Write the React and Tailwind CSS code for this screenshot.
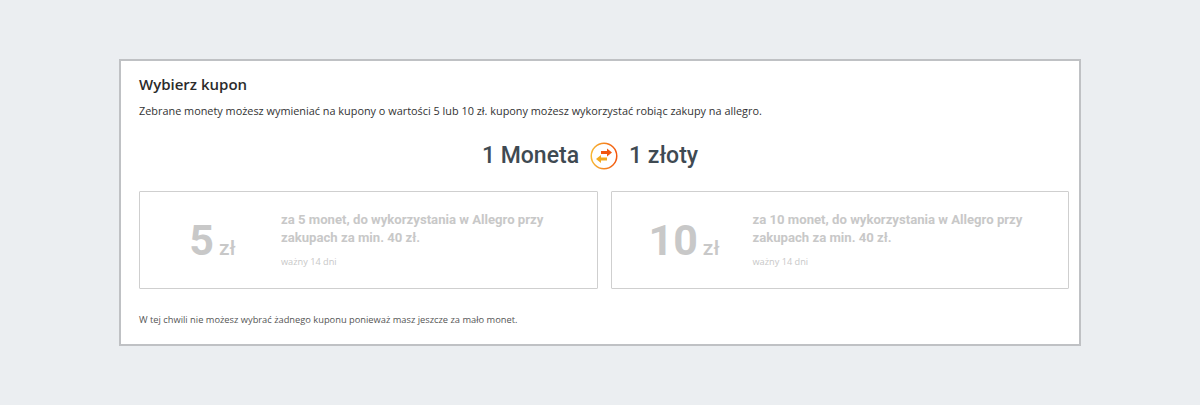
const R = { fontFamily: 'Roboto, sans-serif' };
const O = { fontFamily: '"Open Sans", sans-serif' };
function Coupon({ value }) {
  return (
    <div className="flex h-[98px] w-[459px] items-center rounded-[1px] border border-[#cfcfcf] bg-white">
      <div className="flex w-[141px] items-baseline justify-center pl-[4px] text-[#c8c8c8]">
        <span className="text-[43px] leading-none font-bold">{value}</span>
        <span className="ml-[5px] text-[21px] leading-none font-medium">zł</span>
      </div>
      <div className="w-[300px] pb-[1px]">
        <p className="text-[13.15px] leading-[18px] font-bold text-[#c8c8c8]">za {value} monet, do wykorzystania w Allegro przy<br />zakupach za min. 40 zł.</p>
        <p style={O} className="mt-[8px] text-[9.2px] leading-[14px] text-[#c8c8c8]">ważny 14 dni</p>
      </div>
    </div>
  );
}
export default function App() {
  return (
    <div style={R} className="flex h-[405px] w-[1200px] items-start justify-center bg-[#ebeef1] pt-[59px]">
      <div className="h-[287px] w-[962px] border-2 border-[#bfc1c4] bg-white pt-[13px] pr-[10px] pl-[18px]">
        <h2 style={O} className="text-[15px] leading-[20px] font-semibold text-[#2b2b2b]">Wybierz kupon</h2>
        <p style={O} className="mt-[9px] text-[10.88px] leading-[16px] text-[#333]">Zebrane monety możesz wymieniać na kupony o wartości 5 lub 10 zł. kupony możesz wykorzystać robiąc zakupy na allegro.</p>
        <div className="mt-[21px] flex items-center justify-center gap-[11px] pr-[28px] text-[23px] leading-[32px] font-medium text-[#3f4a52]">
          <span>1 Moneta</span>
          <svg width="28" height="28" viewBox="0 0 28 28" fill="none">
            <defs>
              <linearGradient id="ring" x1="0" y1="0" x2="1" y2="0">
                <stop offset="0" stopColor="#f7b733" />
                <stop offset="1" stopColor="#f2570f" />
              </linearGradient>
            </defs>
            <circle cx="14" cy="14" r="12.75" stroke="url(#ring)" strokeWidth="1.5" />
            <path d="M13 9.5h6V7l5 4-5 4v-2.5h-6z" transform="translate(-2 -0.5)" fill="#f2570f" />
            <path d="M15 15.5H9V13l-5 4 5 4v-2.5h6z" transform="translate(2 0)" fill="#f2a91f" />
          </svg>
          <span>1 złoty</span>
        </div>
        <div className="mt-[19px] flex gap-[13px]">
          <Coupon value="5" />
          <Coupon value="10" />
        </div>
        <p style={O} className="mt-[24px] text-[9.3px] leading-[14px] text-[#555]">W tej chwili nie możesz wybrać żadnego kuponu ponieważ masz jeszcze za mało monet.</p>
      </div>
    </div>
  );
}
